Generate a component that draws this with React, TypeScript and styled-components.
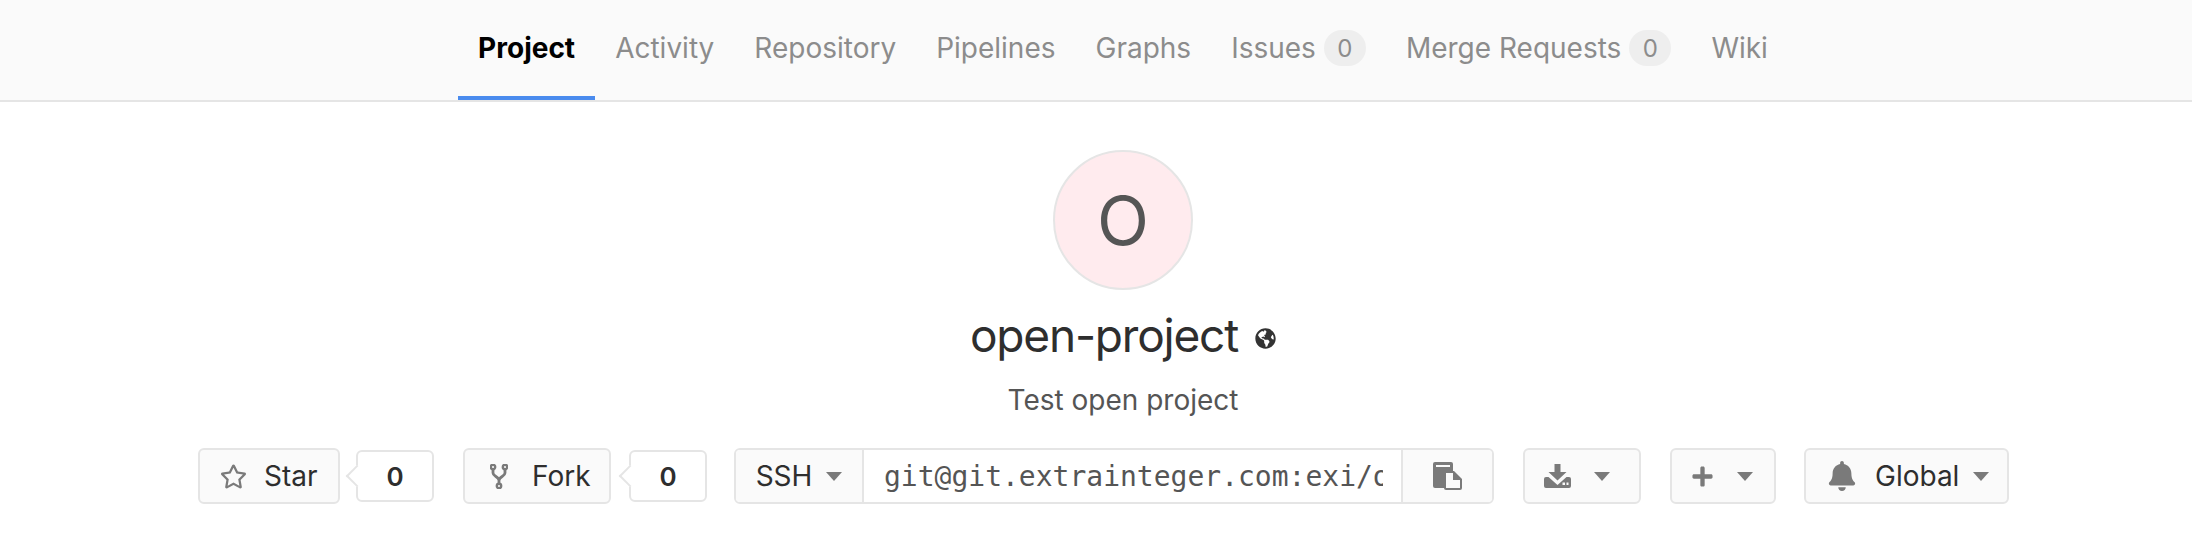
import React from "react";
import styled, { createGlobalStyle } from "styled-components";
import { FaBell, FaGlobeAmericas, FaPlus, FaRegStar } from "react-icons/fa";

const GlobalStyle = createGlobalStyle`
  html, body {
    margin: 0;
    padding: 0;
    background: #fff;
    overflow: hidden;
  }
  body {
    font-family: Inter, "Liberation Sans", sans-serif;
    color: #2e2e2e;
  }
`;

const NavBar = styled.nav`
  display: flex;
  justify-content: center;
  height: 100px;
  padding-left: 54px;
  background: #fafafa;
  border-bottom: 2px solid #e5e5e5;
`;

const NavList = styled.ul`
  display: flex;
  list-style: none;
  margin: 0;
  padding: 0;
`;

const NavItem = styled.li<{ $active?: boolean }>`
  display: flex;
  align-items: center;
  gap: 8px;
  height: 100px;
  box-sizing: border-box;
  padding: 0 20px;
  font-size: 28px;
  font-weight: ${(p) => (p.$active ? 700 : 400)};
  color: ${(p) => (p.$active ? "#000" : "#8c8c8c")};
  border-bottom: 4px solid ${(p) => (p.$active ? "#4a8bee" : "transparent")};
`;

const Badge = styled.span`
  display: inline-flex;
  align-items: center;
  justify-content: center;
  width: 42px;
  height: 36px;
  border-radius: 18px;
  background: #eeeeee;
  font-size: 24px;
`;

const Header = styled.section`
  display: flex;
  flex-direction: column;
  align-items: center;
  padding-left: 54px;
`;

const Avatar = styled.div`
  display: flex;
  align-items: center;
  justify-content: center;
  box-sizing: border-box;
  width: 140px;
  height: 140px;
  margin-top: 48px;
  border: 2px solid #e5e5e5;
  border-radius: 50%;
  background: #ffebee;
  color: #555;
  font-size: 68px;
`;

const TitleRow = styled.div`
  display: flex;
  align-items: center;
  gap: 17px;
  margin-top: 15px;
`;

const Title = styled.h1`
  margin: 0;
  font-size: 46px;
  line-height: 60px;
  font-weight: 400;
  letter-spacing: -1.2px;
  color: #2e2e2e;
`;

const Visibility = styled.span`
  display: flex;
  margin-top: 6px;
  font-size: 21px;
  color: #333;
`;

const Description = styled.p`
  margin: 15px 0 0;
  font-size: 28px;
  line-height: 40px;
  color: #555;
`;

const Toolbar = styled.div`
  display: flex;
  align-items: stretch;
  height: 56px;
  margin-top: 28px;
`;

const Button = styled.div<{ $pad: number; $width: number; $gap: number; $after: number }>`
  display: flex;
  align-items: center;
  gap: ${(p) => p.$gap}px;
  box-sizing: border-box;
  width: ${(p) => p.$width}px;
  padding-left: ${(p) => p.$pad - 2}px;
  margin-right: ${(p) => p.$after}px;
  border: 2px solid #e5e5e5;
  border-radius: 6px;
  background: #fafafa;
  font-size: 28px;
  color: #2e2e2e;
  svg {
    color: #7a7a7a;
    flex-shrink: 0;
  }
`;

const CountBox = styled.div<{ $after: number }>`
  position: relative;
  display: flex;
  align-items: center;
  justify-content: center;
  box-sizing: border-box;
  width: 78px;
  margin: 2px ${(p) => p.$after}px 2px 0;
  border: 2px solid #e5e5e5;
  border-radius: 6px;
  background: #fff;
  font-size: 26px;
  font-weight: 600;
  &::before {
    content: "";
    position: absolute;
    left: -9px;
    top: 50%;
    width: 14px;
    height: 14px;
    background: #fff;
    border-left: 2px solid #e5e5e5;
    border-bottom: 2px solid #e5e5e5;
    transform: translateY(-50%) rotate(45deg);
  }
`;

const Caret = styled.span<{ $left?: number }>`
  width: 0;
  height: 0;
  margin-left: ${(p) => p.$left ?? 0}px;
  border-left: 8px solid transparent;
  border-right: 8px solid transparent;
  border-top: 9px solid #7a7a7a;
`;

const CloneGroup = styled.div`
  display: flex;
  width: 760px;
  margin-right: 29px;
  box-sizing: border-box;
  border: 2px solid #e5e5e5;
  border-radius: 6px;
  overflow: hidden;
`;

const CloneProtocol = styled.div`
  display: flex;
  align-items: center;
  justify-content: center;
  gap: 14px;
  width: 126px;
  background: #fafafa;
  border-right: 2px solid #e5e5e5;
  font-size: 28px;
`;

const CloneUrl = styled.input`
  flex: 1;
  min-width: 0;
  padding: 0 18px 0 20px;
  border: 0;
  outline: 0;
  background: #fff;
  font-family: "DejaVu Sans Mono", "Liberation Mono", monospace;
  font-size: 28px;
  color: #555;
`;

const CopyButton = styled.div`
  display: flex;
  align-items: center;
  justify-content: center;
  width: 89px;
  background: #fafafa;
  border-left: 2px solid #e5e5e5;
`;

const ForkIcon = () => (
  <svg width="18" height="25" viewBox="0 0 18 25" fill="none" stroke="#7a7a7a" strokeWidth="2.4">
    <circle cx="3" cy="3" r="2.2" />
    <circle cx="15" cy="3" r="2.2" />
    <circle cx="9" cy="22" r="2.2" />
    <path strokeWidth="2.8" d="M3 6v3c0 3.500 6 3.500 6 7.500v3M15 6v3c0 3.500-6 3.500-6 7.500" />
  </svg>
);

const CopyIcon = () => (
  <svg width="29" height="28" viewBox="0 0 29 28">
    <path fill="#7a7a7a" d="M2 0h16a2 2 0 0 1 2 2v24H2a2 2 0 0 1-2-2V2a2 2 0 0 1 2-2z" />
    <rect x="3" y="3" width="14" height="2" fill="#fafafa" />
    <path fill="#7a7a7a" d="M11 9h10l8 8v9a2 2 0 0 1-2 2H13a2 2 0 0 1-2-2z" />
    <path fill="#fafafa" d="M13 11h7v7h7v8H13z" />
  </svg>
);

const DownloadIcon = () => (
  <svg width="27" height="24" viewBox="0 0 27 24">
    <path fill="#7a7a7a" d="M10.500 0h6v8h6l-9 8.500-9-8.500h6z" />
    <path
      fill="#7a7a7a"
      fillRule="evenodd"
      d="M2 13h2.500l9 8 9-8H25a2 2 0 0 1 2 2v7a2 2 0 0 1-2 2H2a2 2 0 0 1-2-2v-7a2 2 0 0 1 2-2zm16.500 5.500v2.500h2.500v-2.500zm4 0v2.500h2v-2.500z"
    />
  </svg>
);

const tabs = ["Activity", "Repository", "Pipelines", "Graphs"];

const App: React.FC = () => {
  return (
    <>
      <GlobalStyle />
      <NavBar>
        <NavList>
          <NavItem $active>Project</NavItem>
          {tabs.map((tab) => (
            <NavItem key={tab}>{tab}</NavItem>
          ))}
          <NavItem>
            Issues <Badge>0</Badge>
          </NavItem>
          <NavItem>
            Merge Requests <Badge>0</Badge>
          </NavItem>
          <NavItem>Wiki</NavItem>
        </NavList>
      </NavBar>
      <Header>
        <Avatar>O</Avatar>
        <TitleRow>
          <Title>open-project</Title>
          <Visibility>
            <FaGlobeAmericas />
          </Visibility>
        </TitleRow>
        <Description>Test open project</Description>
        <Toolbar>
          <Button $width={142} $pad={22} $gap={17} $after={16}>
            <FaRegStar size={27} />
            Star
          </Button>
          <CountBox $after={29}>0</CountBox>
          <Button $width={148} $pad={27} $gap={24} $after={18}>
            <ForkIcon />
            Fork
          </Button>
          <CountBox $after={27}>0</CountBox>
          <CloneGroup>
            <CloneProtocol>
              SSH <Caret />
            </CloneProtocol>
            <CloneUrl readOnly value="git@git.extrainteger.com:exi/open-project.git" />
            <CopyButton>
              <CopyIcon />
            </CopyButton>
          </CloneGroup>
          <Button $width={118} $pad={21} $gap={23} $after={29}>
            <DownloadIcon />
            <Caret />
          </Button>
          <Button $width={106} $pad={21} $gap={23} $after={28}>
            <FaPlus size={23} />
            <Caret />
          </Button>
          <Button $width={205} $pad={23} $gap={18} $after={39}>
            <FaBell size={30} />
            Global
            <Caret $left={-4} />
          </Button>
        </Toolbar>
      </Header>
    </>
  );
};

export default App;
